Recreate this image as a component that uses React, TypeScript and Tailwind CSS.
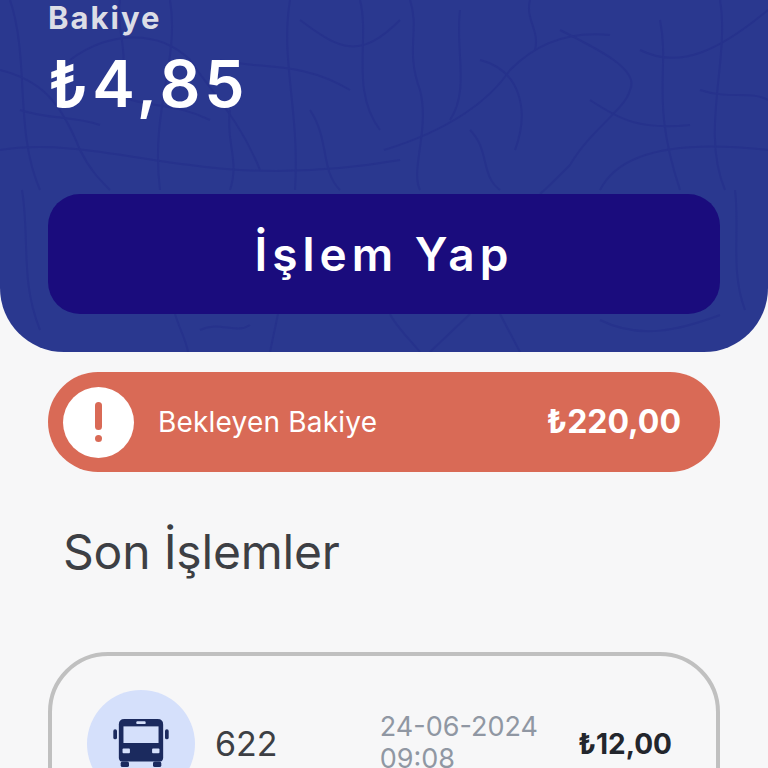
const font = "font-['Inter','Noto_Sans',sans-serif]";

// street pattern behind the balance header
const streets = [
  "M10 0C30 60 14 130 40 190",
  "M0 150C60 140 130 158 190 165C260 175 330 172 400 160",
  "M70 60C110 30 160 30 190 60C210 90 240 120 260 170",
  "M170 0C180 60 150 110 160 190",
  "M290 0C280 60 300 110 295 190",
  "M300 20C340 50 360 60 400 20",
  "M410 0C420 30 405 50 420 90C430 130 410 170 420 190",
  "M384 150C450 130 490 100 510 70C530 50 560 30 610 35",
  "M560 30C600 50 640 70 630 90C625 110 590 130 570 165C555 180 545 190 540 194",
  "M768 10C720 50 680 70 640 50",
  "M600 190C620 150 680 140 768 150",
  "M0 70C40 80 60 100 80 150C90 170 100 180 110 190",
  "M360 0C370 40 350 90 380 130",
  "M720 0C730 60 700 130 725 190",
  "M460 10C455 50 470 90 450 120",
  "M480 60C520 70 530 110 515 150",
  "M660 20C670 70 650 100 680 190",
  "M700 90C730 100 750 90 768 100",
  "M530 0C525 20 540 30 535 50",
  "M590 100C620 120 640 130 690 125",
  "M220 60C260 70 300 60 350 90",
  "M110 90C140 110 170 100 210 120",
  "M310 110C330 140 320 170 340 190",
  "M20 110C50 120 70 115 100 125",
  "M120 0C115 30 130 50 120 80",
  "M230 110C225 140 240 160 230 190",
  "M470 130C490 150 480 175 500 190",
  "M175 314C180 330 186 340 188 352",
  "M278 314L270 352",
  "M200 330C220 320 235 335 250 325",
  "M420 352C410 340 395 325 390 314",
  "M430 352L470 314",
  "M520 352L500 314",
  "M600 320C640 340 680 330 720 315",
  "M22 190C30 240 20 280 40 330",
  "M735 190C740 230 730 270 745 310",
];

function Bus() {
  return (
    <svg viewBox="0 0 60 52" className="-mt-[3px] h-[48px] w-[60px]" fill="#1b2a5e">
      <rect x="0" y="11" width="4" height="11" rx="2" />
      <rect x="56" y="11" width="4" height="11" rx="2" />
      <path d="M12 0h36c4 0 6 2 6 6v36c0 2-1 4-3 4H9c-2 0-3-2-3-4V6c0-4 2-6 6-6z" />
      <rect x="8" y="46" width="9" height="6" rx="2" />
      <rect x="43" y="46" width="9" height="6" rx="2" />
      <rect x="11" y="8" width="38" height="18" fill="#d5e0fb" />
      <rect x="25" y="2.5" width="10" height="3" rx="1" fill="#d5e0fb" />
      <rect x="10" y="32" width="8" height="5" rx="1" fill="#d5e0fb" />
      <rect x="42" y="32" width="8" height="5" rx="1" fill="#d5e0fb" />
    </svg>
  );
}

export default function App() {
  return (
    <div className={`h-[768px] overflow-hidden bg-[#f7f7f8] ${font}`}>
      {/* Balance */}
      <div className="relative h-[352px] overflow-hidden rounded-b-[64px] bg-[#2a388f] px-12">
        <svg className="absolute inset-0 h-full w-full" viewBox="0 0 768 352" fill="none" stroke="#26328c" strokeWidth="2">
          {streets.map((d) => (
            <path key={d} d={d} />
          ))}
        </svg>
        <div className="relative">
          <div className="text-[31px] leading-[36px] font-bold tracking-[2px] text-[#dcdde6]">Bakiye</div>
          <div className="mt-[12px] text-[64px] leading-[72px] font-semibold tracking-[4px] text-white">₺4,85</div>
          <button className="mt-[74px] flex h-[120px] w-full items-center justify-center rounded-[32px] bg-[#1a0c7d] text-[46px] font-semibold tracking-[5px] text-white">
            İşlem Yap
          </button>
        </div>
      </div>

      {/* Pending balance */}
      <div className="mx-12 mt-5 flex h-[100px] items-center rounded-full bg-[#d96a56] pl-[15px] pr-[39px] text-white">
        <div className="flex h-[71px] w-[71px] items-center justify-center rounded-full bg-white">
          <span className="h-[40px] w-[7px]">
            <span className="block h-[28px] w-full rounded-full bg-[#d96a56]" />
            <span className="mt-[5px] block h-[7px] w-full rounded-full bg-[#d96a56]" />
          </span>
        </div>
        <span className="ml-[24px] text-[28px] tracking-[0.2px]">Bekleyen Bakiye</span>
        <span className="ml-auto text-[32px] font-bold">₺220,00</span>
      </div>

      <h2 className="mt-[50px] ml-[63px] text-[48px] leading-[60px] tracking-[-0.2px] text-[#3d3f44]">Son İşlemler</h2>

      {/* Recent transactions */}
      <div className="mx-12 mt-[70px] flex h-[190px] items-start rounded-[60px] border-4 border-[#c0c0c0] pl-[35px] pr-[44px] pt-[34px]">
        <div className="flex h-[108px] w-[108px] shrink-0 items-center justify-center rounded-full bg-[#d5e0fb]">
          <Bus />
        </div>
        <span className="ml-[20px] mt-[32px] text-[34px] leading-[44px] text-[#3d3f44]">622</span>
        <div className="ml-auto text-[27px] leading-[32px] text-[#9097a3]">
          <div className="mt-[21px]">24-06-2024</div>
          <div>09:08</div>
        </div>
        <span className="ml-[40px] mt-[32px] text-[28px] leading-[44px] font-bold text-[#23262d]">₺12,00</span>
      </div>
    </div>
  );
}
